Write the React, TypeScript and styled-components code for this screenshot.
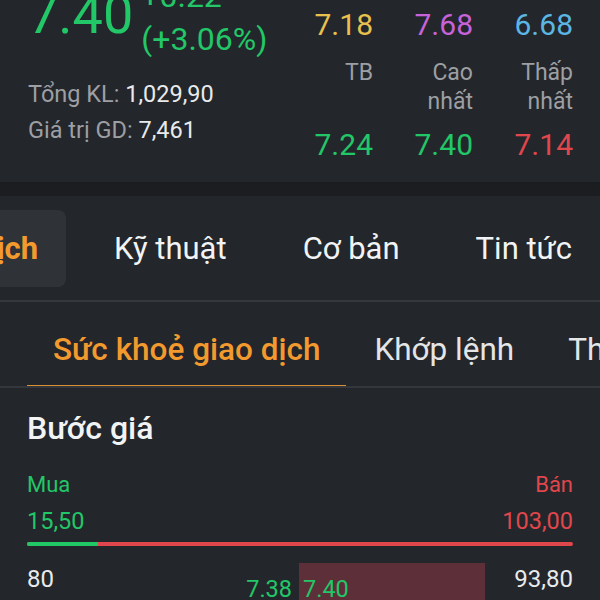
import styled, { createGlobalStyle } from "styled-components";

const GlobalStyle = createGlobalStyle`
  html, body {
    margin: 0;
    padding: 0;
    background: #23262b;
    overflow: hidden;
  }
  body {
    font-family: Roboto, "Noto Sans", "Liberation Sans", sans-serif;
    color: #e9eaec;
  }
`;

const colors = {
  green: "#22c768",
  red: "#e0474c",
  yellow: "#e7c14e",
  purple: "#c862d9",
  blue: "#5bb6e3",
  grey: "#9d9fa3",
  white: "#e9eaec",
  orange: "#f29a2e",
};

const Page = styled.div`
  width: 600px;
  height: 600px;
  overflow: hidden;
  background: #23262b;
`;

const Header = styled.div`
  height: 182px;
  display: flex;
  justify-content: space-between;
  padding: 0 27px 0 28px;
`;

const PriceCol = styled.div`
  display: flex;
  flex-direction: column;
`;

const PriceTop = styled.div`
  display: flex;
  align-items: flex-start;
  gap: 8px;
`;

const BigPrice = styled.div`
  font-size: 54px;
  line-height: 52px;
  margin-top: -11px;
  color: ${colors.green};
`;

const Change = styled.div`
  font-size: 32px;
  line-height: 43px;
  margin-top: -25px;
  color: ${colors.green};
`;

const InfoBlock = styled.div`
  margin-top: 15px;
  font-size: 23.5px;
  line-height: 36px;
  color: ${colors.grey};
  white-space: nowrap;
`;

const InfoValue = styled.span`
  color: ${colors.white};
`;

const StatsGrid = styled.div`
  display: grid;
  grid-template-columns: repeat(3, 100px);
`;

const StatCol = styled.div`
  display: flex;
  flex-direction: column;
  align-items: flex-end;
`;

const StatValue = styled.div<{ $color: string; $gap?: number }>`
  font-size: 30px;
  line-height: 40px;
  margin-top: ${(p) => p.$gap ?? 0}px;
  color: ${(p) => p.$color};
`;

const StatLabel = styled.div`
  font-size: 23px;
  line-height: 29px;
  height: 60px;
  margin-top: 13px;
  text-align: right;
  color: ${colors.grey};
`;

const Band = styled.div`
  height: 14px;
  background: #1b1d21;
`;

const TabBar = styled.div`
  height: 104px;
  border-bottom: 2px solid #35383d;
  display: flex;
  justify-content: flex-end;
  align-items: center;
  gap: 20px;
  overflow: hidden;
`;

const Tab = styled.div<{ $active?: boolean }>`
  flex-shrink: 0;
  height: 77px;
  padding: 0 28px;
  display: flex;
  align-items: center;
  border-radius: 8px;
  font-size: 31px;
  font-weight: ${(p) => (p.$active ? 700 : 400)};
  color: ${(p) => (p.$active ? colors.orange : "#f2f3f4")};
  background: ${(p) => (p.$active ? "#2f3237" : "transparent")};
  white-space: nowrap;
`;

const SubTabBar = styled.div`
  height: 84px;
  border-bottom: 2px solid #33363b;
  display: flex;
  gap: 2px;
  padding-left: 27px;
  overflow: hidden;
`;

const SubTab = styled.div<{ $active?: boolean }>`
  flex-shrink: 0;
  padding: 12px 26px 0;
  display: flex;
  align-items: center;
  margin-bottom: -2px;
  border-bottom: 3px solid ${(p) => (p.$active ? "#d98f35" : "transparent")};
  font-size: 31.5px;
  font-weight: ${(p) => (p.$active ? 500 : 400)};
  color: ${(p) => (p.$active ? colors.orange : "#e4e5e7")};
  white-space: nowrap;
`;

const Section = styled.div`
  padding: 20px 27px 0;
`;

const SectionTitle = styled.div`
  font-size: 32px;
  line-height: 40px;
  font-weight: 500;
  color: #f2f3f4;
`;

const SideRow = styled.div<{ $gap: number; $size: number }>`
  display: flex;
  justify-content: space-between;
  margin-top: ${(p) => p.$gap}px;
  font-size: ${(p) => p.$size}px;
  line-height: 30px;
`;

const Colored = styled.span<{ $color: string }>`
  color: ${(p) => p.$color};
`;

const RatioBar = styled.div`
  margin-top: 6px;
  height: 4px;
  border-radius: 2px;
  background: ${colors.red};
  overflow: hidden;
`;

const RatioFill = styled.div`
  height: 100%;
  background: ${colors.green};
`;

const StepRow = styled.div`
  margin-top: 17px;
  height: 40px;
  display: flex;
`;

const BuySide = styled.div`
  flex: 1;
  display: flex;
  justify-content: space-between;
  padding-right: 7px;
`;

const SellSide = styled.div`
  width: 274px;
  display: flex;
  justify-content: space-between;
`;

const SellBar = styled.div`
  background: #5d2f39;
  padding-left: 4px;
`;

const Volume = styled.div`
  font-size: 24px;
  line-height: 32px;
  color: ${colors.white};
`;

const StepPrice = styled.div`
  font-size: 23.5px;
  line-height: 40px;
  padding-top: 6px;
  color: ${colors.green};
`;

const stats = [
  { top: "7.18", topColor: colors.yellow, label: ["TB"], bottom: "7.24", bottomColor: colors.green },
  { top: "7.68", topColor: colors.purple, label: ["Cao", "nhất"], bottom: "7.40", bottomColor: colors.green },
  { top: "6.68", topColor: colors.blue, label: ["Thấp", "nhất"], bottom: "7.14", bottomColor: colors.red },
];

export default function App() {
  const buy = 15.5;
  const sell = 103;
  const buyShare = (buy / (buy + sell)) * 100;

  return (
    <Page>
      <GlobalStyle />
      <Header>
        <PriceCol>
          <PriceTop>
            <BigPrice>7.40</BigPrice>
            <Change>
              +0.22
              <br />
              (+3.06%)
            </Change>
          </PriceTop>
          <InfoBlock>
            Tổng KL: <InfoValue>1,029,90</InfoValue>
            <br />
            Giá trị GD: <InfoValue>7,461</InfoValue>
          </InfoBlock>
        </PriceCol>
        <StatsGrid>
          {stats.map((s) => (
            <StatCol key={s.top}>
              <StatValue $color={s.topColor} $gap={5}>
                {s.top}
              </StatValue>
              <StatLabel>
                {s.label.map((l) => (
                  <div key={l}>{l}</div>
                ))}
              </StatLabel>
              <StatValue $color={s.bottomColor} $gap={7}>
                {s.bottom}
              </StatValue>
            </StatCol>
          ))}
        </StatsGrid>
      </Header>
      <Band />
      <TabBar>
        <Tab $active>Giao dịch</Tab>
        <Tab>Kỹ thuật</Tab>
        <Tab>Cơ bản</Tab>
        <Tab>Tin tức</Tab>
      </TabBar>
      <SubTabBar>
        <SubTab $active>Sức khoẻ giao dịch</SubTab>
        <SubTab>Khớp lệnh</SubTab>
        <SubTab>Thống kê</SubTab>
      </SubTabBar>
      <Section>
        <SectionTitle>Bước giá</SectionTitle>
        <SideRow $gap={22} $size={22}>
          <Colored $color={colors.green}>Mua</Colored>
          <Colored $color={colors.red}>Bán</Colored>
        </SideRow>
        <SideRow $gap={6} $size={23.5}>
          <Colored $color={colors.green}>15,50</Colored>
          <Colored $color={colors.red}>103,00</Colored>
        </SideRow>
        <RatioBar>
          <RatioFill style={{ width: `${buyShare}%` }} />
        </RatioBar>
        <StepRow>
          <BuySide>
            <Volume>80</Volume>
            <StepPrice>7.38</StepPrice>
          </BuySide>
          <SellSide>
            <SellBar style={{ width: "182px" }}>
              <StepPrice>7.40</StepPrice>
            </SellBar>
            <Volume>93,80</Volume>
          </SellSide>
        </StepRow>
      </Section>
    </Page>
  );
}
